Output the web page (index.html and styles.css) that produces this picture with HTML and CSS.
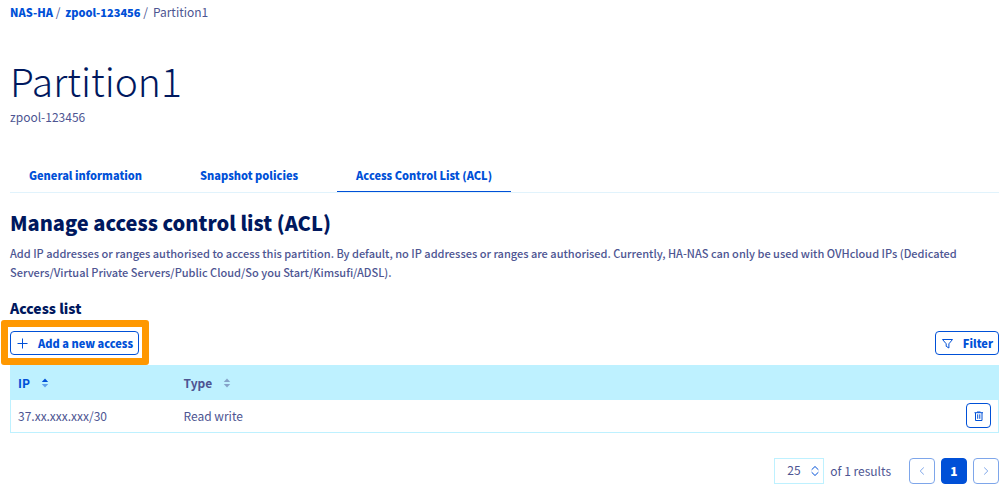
FILE: index.html
```html
<!DOCTYPE html>
<html lang="en">
<head>
<meta charset="utf-8">
<meta name="viewport" content="width=device-width, initial-scale=1">
<title>Partition1 - Access Control List</title>
<link rel="stylesheet" href="styles.css">
</head>
<body>
<main class="page">
  <nav class="breadcrumb" aria-label="Breadcrumb">
    <ol class="breadcrumb-list">
      <li><a href="#nas">NAS-HA</a> <span class="sep">/</span></li>
      <li><a href="#zpool">zpool-123456</a> <span class="sep">/</span></li>
      <li aria-current="page">Partition1</li>
    </ol>
  </nav>

  <header class="heading">
    <h1 class="title">Partition1</h1>
    <p class="subtitle">zpool-123456</p>
  </header>

  <nav class="tabs" aria-label="Sections">
    <a class="tab" href="#general">General information</a>
    <a class="tab" href="#snapshots">Snapshot policies</a>
    <a class="tab tab-active" href="#acl" aria-current="page">Access Control List (ACL)</a>
  </nav>

  <section class="acl">
    <h2 class="section-title">Manage access control list (ACL)</h2>
    <p class="description">Add IP addresses or ranges authorised to access this partition. By default, no IP addresses or ranges are authorised. Currently, HA-NAS can only be used with OVHcloud IPs (Dedicated Servers/Virtual Private Servers/Public Cloud/So you Start/Kimsufi/ADSL).</p>
    <h3 class="list-title">Access list</h3>

    <div class="toolbar">
      <div class="highlighted">
        <button class="button" type="button">
          <svg class="icon" viewBox="0 0 12 12" aria-hidden="true"><path d="M6.500 1.500v10M1.500 6.500h10"/></svg>
          Add a new access
        </button>
      </div>
      <button class="button" type="button">
        <svg class="icon" viewBox="0 0 12 12" aria-hidden="true"><path d="M1.500 2.500h10L7.900 6.800v4.200L5.200 9.300V6.800z"/></svg>
        Filter
      </button>
    </div>

    <table class="grid">
      <thead>
        <tr>
          <th class="col-ip" scope="col" aria-sort="ascending">
            <button class="sort sort-active" type="button">IP
              <svg class="sort-icon" viewBox="0 0 8 10" aria-hidden="true"><path d="M4 0.5l3.2 3.5H.8z"/><path class="sort-down" d="M4 9.5L.8 6h6.4z"/></svg>
            </button>
          </th>
          <th scope="col">
            <button class="sort" type="button">Type
              <svg class="sort-icon sort-idle" viewBox="0 0 8 10" aria-hidden="true"><path d="M4 0.5l3.2 3.5H.8z"/><path d="M4 9.5L.8 6h6.4z"/></svg>
            </button>
          </th>
          <th class="col-action"></th>
        </tr>
      </thead>
      <tbody>
        <tr>
          <td>37.xx.xxx.xxx/30</td>
          <td>Read write</td>
          <td class="col-action">
            <button class="icon-button" type="button" aria-label="Delete access">
              <svg class="icon" viewBox="0 0 12 12" aria-hidden="true"><path d="M1.500 2.700h8.500M4 2h3.500M2.500 3v7.500h6.500V3M4.700 4.300v4.500M6.800 4.300v4.500"/></svg>
            </button>
          </td>
        </tr>
      </tbody>
    </table>

    <div class="pagination">
      <div class="page-size">
        <select class="page-size-select" id="page-size"><option>25</option><option>50</option><option>100</option></select>
        <svg class="page-size-icon" viewBox="0 0 8 12" aria-hidden="true"><path d="M.6 4.800L4 1.500l3.400 3.300M.6 7.200L4 10.500l3.400-3.300"/></svg>
      </div>
      <label class="results" for="page-size">of 1 results</label>
      <div class="pager">
        <button class="page-button page-disabled" type="button" aria-label="Previous page" disabled><svg class="icon" viewBox="0 0 12 12" aria-hidden="true"><path d="M7.800 2.500L4.200 6l3.600 3.500"/></svg></button>
        <button class="page-button page-current" type="button" aria-current="page">1</button>
        <button class="page-button page-disabled" type="button" aria-label="Next page" disabled><svg class="icon" viewBox="0 0 12 12" aria-hidden="true"><path d="M4.200 2.500L7.800 6 4.200 9.500"/></svg></button>
      </div>
    </div>
  </section>
</main>
</body>
</html>
```
FILE: styles.css
```css
:root {
  --blue: #0050d7;
  --navy: #00185e;
  --text: #4d5592;
  --sky: #bef1ff;
}

* { box-sizing: border-box; }

body {
  margin: 0;
  background: #fff;
  color: var(--text);
  font: 12px/20px "Source Sans Pro", "Noto Sans CJK SC", sans-serif;
}

h1, h2, h3, p, ol { margin: 0; padding: 0; }
a { color: var(--blue); font-size: 11px; font-weight: 900; text-decoration: none; }
button, select { font: inherit; color: inherit; margin: 0; cursor: pointer; }

.page { padding: 2px 8px 4px 10px; }

.breadcrumb-list { display: flex; gap: 5px; list-style: none; }

.heading { padding-top: 32px; }
.title { color: var(--navy); font-family: "Source Sans Pro", "Noto Sans CJK SC Light", "Noto Sans CJK SC", sans-serif; font-size: 39px; font-weight: 300; line-height: 52px; }
.subtitle { margin-top: 1px; }

.tabs { display: flex; gap: 20px; margin-top: 32px; border-bottom: 1px solid #e1f3fc; }
.tab { padding: 6px 19px; border-bottom: 1px solid transparent; }
.tab-active { border-color: var(--blue); }

.section-title { margin-top: 16px; color: var(--navy); font-size: 20px; font-weight: 900; line-height: 28px; }
.description { margin-top: 7px; font-size: 11px; font-weight: 500; line-height: 19px; }
.list-title { margin-top: 16px; color: var(--navy); font-size: 14px; font-weight: 900; line-height: 20px; }

.toolbar { display: flex; justify-content: space-between; margin-top: 13px; }
.highlighted { position: relative; }
.highlighted::after {
  content: "";
  position: absolute;
  inset: -11px -10px -10px -9px;
  border: 7px solid #ff9800;
  border-radius: 3px;
  pointer-events: none;
}

.button {
  display: flex;
  align-items: center;
  gap: 10px;
  height: 24px;
  padding: 0 5px;
  border: 1px solid var(--blue);
  border-radius: 4px;
  background: #fff;
  color: var(--blue);
  font-size: 11px;
  font-weight: 900;
}
.icon { display: block; width: 12px; height: 12px; fill: none; stroke: currentColor; stroke-width: 1; }

.grid { width: 100%; margin-top: 10px; border: 1px solid var(--sky); border-collapse: collapse; text-align: left; }
.grid th { height: 34px; padding: 0 7px; background: var(--sky); }
.grid td { height: 33px; padding: 0 7px; }
.grid .col-ip { width: 166px; }
.grid .col-action { width: 48px; }
.sort { display: flex; align-items: center; gap: 11px; padding: 0; border: 0; background: none; font-weight: 700; }
.sort-active { color: var(--blue); }
.sort-icon { width: 8px; height: 10px; fill: currentColor; }
.sort-down { opacity: 0.5; }
.sort-idle { opacity: 0.5; }
.icon-button {
  display: grid;
  place-items: center;
  width: 25px;
  height: 25px;
  margin-left: auto;
  padding: 0;
  border: 1px solid var(--blue);
  border-radius: 4px;
  background: #fff;
  color: var(--blue);
}

.pagination { display: flex; justify-content: flex-end; align-items: center; margin-top: 25px; }
.page-size { position: relative; width: 50px; height: 26px; }
.page-size-select { width: 100%; height: 100%; padding: 0 12px 2px; border: 1px solid var(--sky); border-radius: 0; background: #fff; appearance: none; }
.page-size-icon { position: absolute; top: 7px; right: 5px; width: 8px; height: 12px; fill: none; stroke: var(--blue); pointer-events: none; }
.results { margin: 0 18px 0 6px; }
.pager { display: flex; gap: 6px; }
.page-button {
  display: grid;
  place-items: center;
  width: 26px;
  height: 26px;
  padding: 0;
  border: 1px solid var(--blue);
  border-radius: 4px;
  background: #fff;
  color: var(--blue);
  font-weight: 900;
}
.page-current { background: var(--blue); color: #fff; }
.page-disabled { opacity: 0.5; cursor: default; }
```
